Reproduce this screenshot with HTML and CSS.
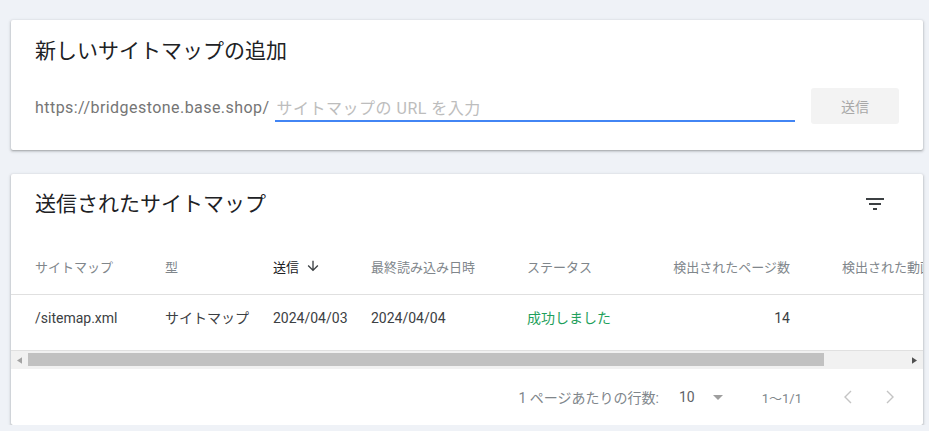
FILE: index.html
```html
<!DOCTYPE html>
<html lang="ja">
<head>
    <meta charset="UTF-8">
    <meta name="viewport" content="width=device-width, initial-scale=1.0">
    <title>サイトマップ</title>
    <link rel="stylesheet" href="styles.css">
</head>
<body>
    <div class="card add-card">
        <h2 class="card-title">新しいサイトマップの追加</h2>
        <div class="add-row">
            <span class="url-prefix">https://bridgestone.base.shop/</span>
            <input class="url-input" type="text" placeholder="サイトマップの URL を入力">
            <button class="submit-btn">送信</button>
        </div>
    </div>

    <div class="card list-card">
        <div class="list-head">
            <h2 class="card-title">送信されたサイトマップ</h2>
            <svg class="filter-icon" viewBox="0 0 24 24" width="24" height="24">
                <path d="M10 18h4v-2h-4v2zM3 6v2h18V6H3zm3 7h12v-2H6v2z"/>
            </svg>
        </div>

        <div class="table-wrap">
            <div class="row head-row">
                <div class="cell">サイトマップ</div>
                <div class="cell">型</div>
                <div class="cell sorted">送信
                    <svg class="sort-icon" viewBox="0 0 24 24" width="16" height="16">
                        <path d="M20 12l-1.41-1.41L13 16.17V4h-2v12.17l-5.58-5.59L4 12l8 8 8-8z"/>
                    </svg>
                </div>
                <div class="cell">最終読み込み日時</div>
                <div class="cell">ステータス</div>
                <div class="cell num">検出されたページ数</div>
                <div class="cell last">検出された動画数</div>
            </div>
            <div class="row data-row">
                <div class="cell">/sitemap.xml</div>
                <div class="cell">サイトマップ</div>
                <div class="cell">2024/04/03</div>
                <div class="cell">2024/04/04</div>
                <div class="cell ok">成功しました</div>
                <div class="cell num">14</div>
                <div class="cell last"></div>
            </div>
        </div>

        <div class="hscroll">
            <div class="hs-btn">
                <svg viewBox="0 0 6 8" width="5" height="7"><path d="M6 0v8L0 4z"/></svg>
            </div>
            <div class="hs-thumb"></div>
            <div class="hs-btn right">
                <svg viewBox="0 0 6 8" width="5" height="7"><path d="M0 0v8l6-4z"/></svg>
            </div>
        </div>

        <div class="pager">
            <span class="pager-label">1 ページあたりの行数:</span>
            <span class="pager-size">10</span>
            <svg class="pager-drop" viewBox="7 10 10 5" width="10" height="5"><path d="M7 10l5 5 5-5z"/></svg>
            <span class="pager-range">1〜1/1</span>
            <svg class="pager-nav" viewBox="0 0 24 24" width="24" height="24"><polyline points="15,6 9,12 15,18"/></svg>
            <svg class="pager-nav" viewBox="0 0 24 24" width="24" height="24"><polyline points="9,6 15,12 9,18"/></svg>
        </div>
    </div>
</body>
</html>
```

FILE: styles.css
```css
body {
    margin: 0;
    padding: 20px 6px 0 11px;
    background-color: #eff2f7;
    font-family: Roboto, "Noto Sans CJK JP", sans-serif;
    color: #202124;
}
.card {
    width: 912px;
    background-color: #fff;
    border-radius: 2px;
    box-shadow: 0 1px 2px rgba(60, 64, 67, 0.35), 0 1px 3px 1px rgba(60, 64, 67, 0.12);
    box-sizing: border-box;
}
.card-title {
    margin: 0;
    font-size: 21px;
    line-height: 28px;
    font-weight: 400;
    color: #202124;
}
.add-card {
    padding: 17px 24px 26px 24px;
}
.add-row {
    display: flex;
    align-items: flex-end;
    height: 36px;
    margin-top: 23px;
}
.url-prefix {
    font-size: 16px;
    line-height: 24px;
    letter-spacing: 0.45px;
    color: #757575;
    margin-bottom: 4px;
    margin-right: 5px;
    white-space: nowrap;
}
.url-input {
    flex: 1;
    height: 24px;
    padding: 0 2px;
    margin: 0 16px 2px 0;
    border: none;
    border-bottom: 2px solid #4285f4;
    outline: none;
    font-family: Roboto, "Noto Sans CJK JP", sans-serif;
    font-size: 16px;
    letter-spacing: 0.5px;
    color: #202124;
    background: transparent;
}
.url-input::placeholder {
    color: #bdbdbd;
}
.submit-btn {
    width: 88px;
    height: 36px;
    border: none;
    border-radius: 3px;
    background-color: #f3f3f3;
    color: #a8a8a8;
    font-family: Roboto, "Noto Sans CJK JP", sans-serif;
    font-size: 14px;
}
.list-card {
    margin-top: 24px;
    overflow: hidden;
}
.list-head {
    display: flex;
    justify-content: space-between;
    align-items: center;
    padding: 16px 36px 0 24px;
}
.filter-icon {
    fill: #3c4043;
}
.table-wrap {
    margin-top: 20px;
    overflow: hidden;
}
.row {
    display: grid;
    grid-template-columns: 130px 108px 98px 156px 146px 117px 200px;
    width: max-content;
    min-width: 100%;
    padding-left: 24px;
    border-bottom: 1px solid #e0e0e0;
}
.head-row {
    height: 56px;
    align-items: center;
    font-size: 13px;
    color: #80868b;
}
.data-row {
    padding-top: 13px;
    padding-bottom: 22px;
    font-size: 14px;
    line-height: 20px;
    color: #3c4043;
}
.cell {
    white-space: nowrap;
}
.cell.num {
    text-align: right;
}
.cell.last {
    margin-left: 52px;
}
.head-row .sorted {
    display: flex;
    align-items: center;
    gap: 6px;
    color: #202124;
}
.sort-icon {
    fill: #3c4043;
}
.cell.ok {
    color: #1fa05c;
}
.hscroll {
    display: flex;
    height: 18px;
    background-color: #f1f1f1;
}
.hs-btn {
    width: 17px;
    display: flex;
    align-items: center;
    justify-content: center;
    fill: #a3a3a3;
}
.hs-btn.right {
    margin-left: auto;
    fill: #505050;
}
.hs-thumb {
    width: 796px;
    height: 13px;
    margin-top: 2px;
    background-color: #c1c1c1;
}
.pager {
    display: flex;
    align-items: center;
    justify-content: flex-end;
    height: 56px;
    padding-right: 21px;
    font-size: 13px;
    color: #80868b;
}
.pager-label {
    font-size: 14px;
}
.pager-size {
    margin-left: 20px;
    font-size: 14px;
    color: #5f6368;
}
.pager-drop {
    margin-left: 18px;
    fill: #9e9e9e;
}
.pager-range {
    margin-left: 39px;
    margin-right: 34px;
    font-size: 13px;
}
.pager-nav {
    fill: none;
    stroke: #c4c4c4;
    stroke-width: 1.4;
}
.pager-nav + .pager-nav {
    margin-left: 18px;
}
```
